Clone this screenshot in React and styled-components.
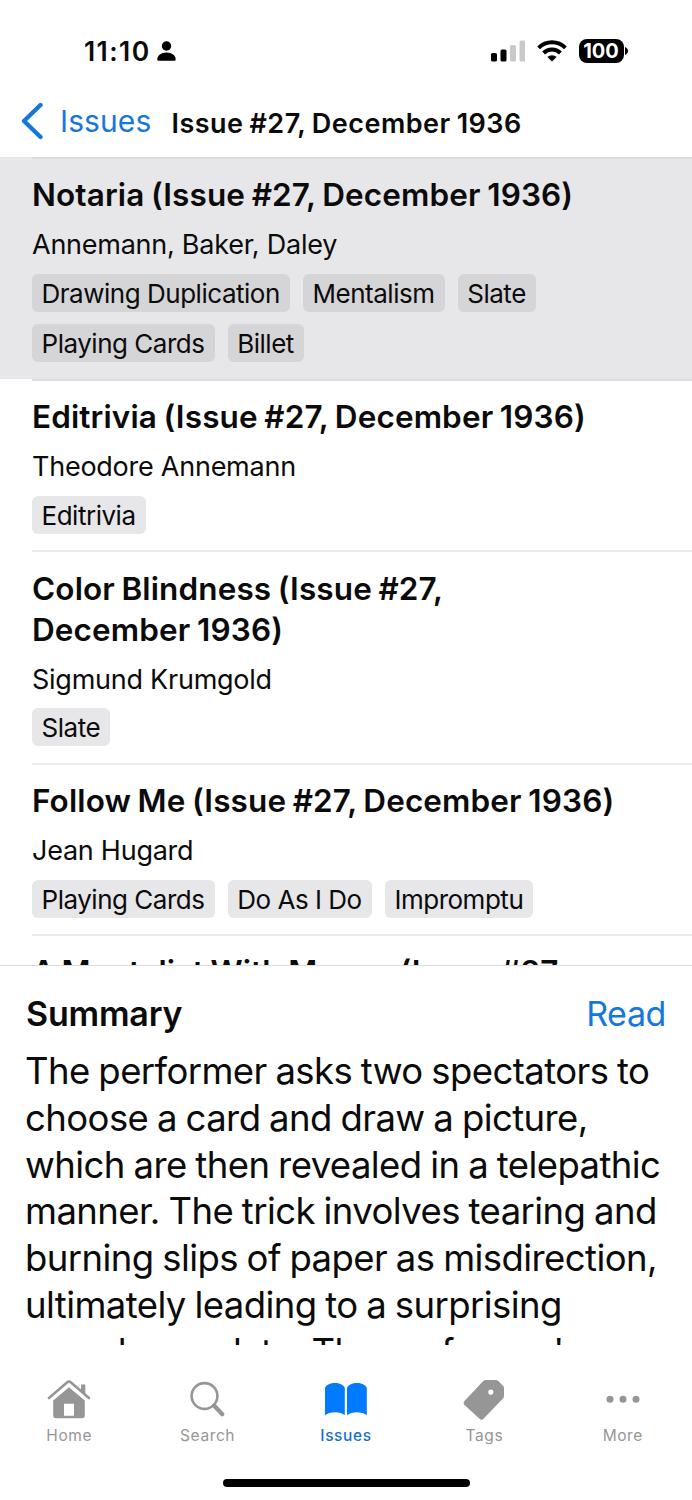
import styled, { createGlobalStyle } from "styled-components";

const GlobalStyle = createGlobalStyle`
  * {
    box-sizing: border-box;
  }

  body {
    margin: 0;
    background: #fff;
    font-family: Inter, "Liberation Sans", sans-serif;
    color: #0b0b0c;
  }
`;

const Screen = styled.div`
  display: flex;
  flex-direction: column;
  width: 692px;
  height: 1500px;
  overflow: hidden;
  background: #fff;
`;

const StatusBar = styled.header`
  display: flex;
  align-items: center;
  justify-content: space-between;
  height: 92px;
  padding: 9px 64px 0 84px;
`;

const Clock = styled.div`
  display: flex;
  align-items: center;
  gap: 6.5px;
  font-size: 26.5px;
  font-weight: 600;
  letter-spacing: 1.4px;
`;

const StatusIcons = styled.div`
  display: flex;
  align-items: center;
  gap: 12px;
`;

const Battery = styled.div`
  display: flex;
  align-items: center;
  gap: 1px;
`;

const BatteryBody = styled.div`
  width: 45px;
  height: 24px;
  padding-right: 1px;
  border-radius: 8px;
  background: #000;
  color: #fff;
  font-size: 20px;
  font-weight: 700;
  letter-spacing: -0.1px;
  line-height: 24px;
  text-align: center;
`;

const NavBar = styled.nav`
  display: flex;
  align-items: center;
  height: 65px;
  padding: 0 21px 6px;
`;

const BackButton = styled.button`
  display: flex;
  align-items: center;
  gap: 17px;
  margin-bottom: 2px;
  padding: 0;
  border: 0;
  background: none;
  color: #1577dd;
  font-family: inherit;
  font-size: 30px;
  letter-spacing: 0.1px;
`;

const NavTitle = styled.h1`
  margin: 3px 0 0 20px;
  font-size: 27px;
  font-weight: 600;
  letter-spacing: 0.5px;
  word-spacing: -1.4px;
`;

const List = styled.ul`
  height: 808px;
  margin: 0;
  padding: 0;
  overflow: hidden;
  list-style: none;
`;

const Item = styled.li`
  padding-left: 32px;
  background: ${(props) => (props.$selected ? "#e7e7e9" : "#fff")};
`;

const ItemBody = styled.div`
  padding: 15.4px 60px 16.6px 0;
  border-top: 2px solid ${(props) => (props.$strong ? "#dbdbdd" : "#ebebec")};
`;

const ItemTitle = styled.h2`
  margin: 0;
  font-size: 31.5px;
  font-weight: 600;
  line-height: 41px;
  letter-spacing: 0.12px;
  word-spacing: -1.5px;
`;

const Authors = styled.p`
  margin: 11.8px 0 11.6px;
  font-size: 27px;
  line-height: 35px;
  letter-spacing: -0.25px;
`;

const Tags = styled.div`
  display: flex;
  flex-wrap: wrap;
  gap: 12.6px 13px;
`;

const Tag = styled.span`
  height: 38px;
  padding: 0 10.2px 0 9.5px;
  border-radius: 6px;
  background: ${(props) => (props.$selected ? "#d5d5d7" : "#e7e7e9")};
  font-size: 26px;
  line-height: 39px;
  letter-spacing: -0.48px;
`;

const Summary = styled.section`
  height: 380px;
  padding: 24px 26px 0;
  border-top: 1px solid #dcdcde;
  overflow: hidden;
`;

const SummaryHeader = styled.div`
  display: flex;
  align-items: center;
  justify-content: space-between;
  height: 47px;
`;

const SummaryTitle = styled.h2`
  margin: 0;
  font-size: 34px;
  font-weight: 600;
  letter-spacing: -0.2px;
`;

const ReadLink = styled.a`
  color: #1577dd;
  font-size: 34px;
  letter-spacing: -0.4px;
`;

const SummaryText = styled.p`
  margin: 11px 0 0 -1px;
  font-size: 36.5px;
  line-height: 46.8px;
  letter-spacing: -0.58px;
  word-spacing: -1px;
  white-space: pre;
`;

const TabBar = styled.nav`
  display: grid;
  grid-template-columns: repeat(5, 1fr);
  height: 134px;
  padding-top: 35px;
`;

const Tab = styled.div`
  display: flex;
  flex-direction: column;
  align-items: center;
  gap: 5px;
  color: ${(props) => (props.$active ? "#1a6fc9" : "#969696")};
  font-size: 15.5px;
  font-weight: ${(props) => (props.$active ? 500 : 400)};
  line-height: 22px;
  letter-spacing: 0.6px;
`;

const HomeIndicator = styled.div`
  flex: none;
  width: 247px;
  height: 8px;
  margin: 0 auto;
  border-radius: 4px;
  background: #000;
`;

const PersonIcon = () => (
  <svg width="19" height="20" viewBox="0 0 19 20">
    <circle cx="9.5" cy="5" r="4.7" />
    <path d="M0.3 18.2C0.3 14.6 4 11.4 9.5 11.4s9.2 3.2 9.2 6.8c0 1-.7 1.6-1.6 1.6H1.9C1 19.8.3 19.2.3 18.2z" />
  </svg>
);

const SignalIcon = () => (
  <svg width="34.5" height="22" viewBox="0 0 34.5 22">
    <rect x="0" y="13" width="6" height="8.5" rx="1.6" />
    <rect x="9.5" y="9.5" width="6" height="12" rx="1.6" />
    <rect x="19" y="5" width="6" height="16.5" rx="1.6" fill="#c9c9c9" />
    <rect x="28.5" y="0.5" width="6" height="21" rx="1.6" fill="#c9c9c9" />
  </svg>
);

const WifiIcon = () => (
  <svg width="30" height="22" viewBox="0 0 30 22">
    <g fill="none" stroke="#000" strokeWidth="4">
      <path d="M1.6 7.9a19 19 0 0 1 26.8 0" />
      <path d="M6.6 13a12 12 0 0 1 16.8 0" />
    </g>
    <path d="M15 21.6l-4.6-4.5a6.6 6.6 0 0 1 9.2 0z" />
  </svg>
);

const BatteryCap = () => (
  <svg width="3" height="8" viewBox="0 0 3 8">
    <path d="M0 0c4 1.4 4 6.6 0 8z" />
  </svg>
);

const BackIcon = () => (
  <svg width="22" height="38" viewBox="0 0 22 38">
    <path
      d="M19.5 3L3 19l16.5 16"
      fill="none"
      stroke="#1577dd"
      strokeWidth="4.4"
      strokeLinecap="round"
      strokeLinejoin="round"
    />
  </svg>
);

const HomeIcon = () => (
  <svg width="44" height="40" viewBox="0 0 44 40">
    <path
      d="M2 18L20.3 2.2Q22 .8 23.7 2.2L42 18"
      fill="none"
      stroke="#969696"
      strokeWidth="2.6"
      strokeLinecap="round"
    />
    <path d="M34 4.5h4.3v10L34 10.8z" fill="#969696" />
    <path
      d="M22 7.3L37.8 20.5V35.5a2.8 2.8 0 0 1-2.8 2.8H9a2.8 2.8 0 0 1-2.8-2.8V20.5zM17 23.8v12h10v-12z"
      fill="#969696"
      fillRule="evenodd"
    />
  </svg>
);

const SearchIcon = () => (
  <svg width="36" height="40" viewBox="0 0 36 40">
    <g fill="none" stroke="#969696">
      <circle cx="14.5" cy="16" r="12.9" strokeWidth="2.6" />
      <path d="M24 25.5L32.3 34.3" strokeWidth="4.2" strokeLinecap="round" />
    </g>
  </svg>
);

const BookIcon = () => (
  <svg width="42" height="40" viewBox="0 0 42 40" fill="#007aff">
    <path d="M0 35.3V8C2.5 1.5 17.2 1.2 19.8 8v27.3C15.5 31.3 4.7 31.3 0 35.3z" />
    <path d="M22 35.3V8C24.6 1.2 39.3 1.5 41.8 8v27.3C37.3 31.3 26.5 31.3 22 35.3z" />
  </svg>
);

const TagIcon = () => (
  <svg width="42" height="40" viewBox="0 0 42 40">
    <path
      d="M20 1.2Q21.5 0 23 0H32.5Q34 0 35 .8L40 5.7Q41 6.7 41 8V16Q41 17.5 40 18.5L20.5 38.8Q18.5 40.6 16.5 38.8L1.5 25Q-.2 23 1.5 21zM27.8 9.5a2.6 2.6 0 1 0 0 5.2 2.6 2.6 0 0 0 0-5.2z"
      fill="#969696"
      fillRule="evenodd"
    />
  </svg>
);

const MoreIcon = () => (
  <svg width="34" height="40" viewBox="0 0 34 40" fill="#969696">
    <circle cx="4" cy="19.3" r="3.5" />
    <circle cx="17" cy="19.3" r="3.5" />
    <circle cx="30" cy="19.3" r="3.5" />
  </svg>
);

// the month and year are kept together with a non-breaking space
const articles = [
  {
    title: "Notaria (Issue #27, December\u00a01936)",
    authors: "Annemann, Baker, Daley",
    tags: ["Drawing Duplication", "Mentalism", "Slate", "Playing Cards", "Billet"],
    selected: true,
  },
  {
    title: "Editrivia (Issue #27, December\u00a01936)",
    authors: "Theodore Annemann",
    tags: ["Editrivia"],
  },
  {
    title: "Color Blindness (Issue #27, December\u00a01936)",
    authors: "Sigmund Krumgold",
    tags: ["Slate"],
  },
  {
    title: "Follow Me (Issue #27, December\u00a01936)",
    authors: "Jean Hugard",
    tags: ["Playing Cards", "Do As I Do", "Impromptu"],
  },
  {
    title: "A Mentalist With Money (Issue #27,",
  },
];

const summary = `The performer asks two spectators to
choose a card and draw a picture,
which are then revealed in a telepathic
manner. The trick involves tearing and
burning slips of paper as misdirection,
ultimately leading to a surprising
reveal on a slate. The performer's`;

const tabs = [
  { label: "Home", Icon: HomeIcon },
  { label: "Search", Icon: SearchIcon },
  { label: "Issues", Icon: BookIcon, active: true },
  { label: "Tags", Icon: TagIcon },
  { label: "More", Icon: MoreIcon },
];

export default function App() {
  return (
    <Screen>
      <GlobalStyle />
      <StatusBar>
        <Clock>
          11:10
          <PersonIcon />
        </Clock>
        <StatusIcons>
          <SignalIcon />
          <WifiIcon />
          <Battery>
            <BatteryBody>100</BatteryBody>
            <BatteryCap />
          </Battery>
        </StatusIcons>
      </StatusBar>
      <NavBar>
        <BackButton>
          <BackIcon />
          Issues
        </BackButton>
        <NavTitle>Issue #27, December 1936</NavTitle>
      </NavBar>
      <List>
        {articles.map(({ title, authors, tags, selected }, index) => (
          <Item key={title} $selected={selected}>
            <ItemBody $strong={index < 2}>
              <ItemTitle>{title}</ItemTitle>
              {authors && <Authors>{authors}</Authors>}
              {tags && (
                <Tags>
                  {tags.map((tag) => (
                    <Tag key={tag} $selected={selected}>
                      {tag}
                    </Tag>
                  ))}
                </Tags>
              )}
            </ItemBody>
          </Item>
        ))}
      </List>
      <Summary>
        <SummaryHeader>
          <SummaryTitle>Summary</SummaryTitle>
          <ReadLink>Read</ReadLink>
        </SummaryHeader>
        <SummaryText>{summary}</SummaryText>
      </Summary>
      <TabBar>
        {tabs.map(({ label, Icon, active }) => (
          <Tab key={label} $active={active}>
            <Icon />
            {label}
          </Tab>
        ))}
      </TabBar>
      <HomeIndicator />
    </Screen>
  );
}
